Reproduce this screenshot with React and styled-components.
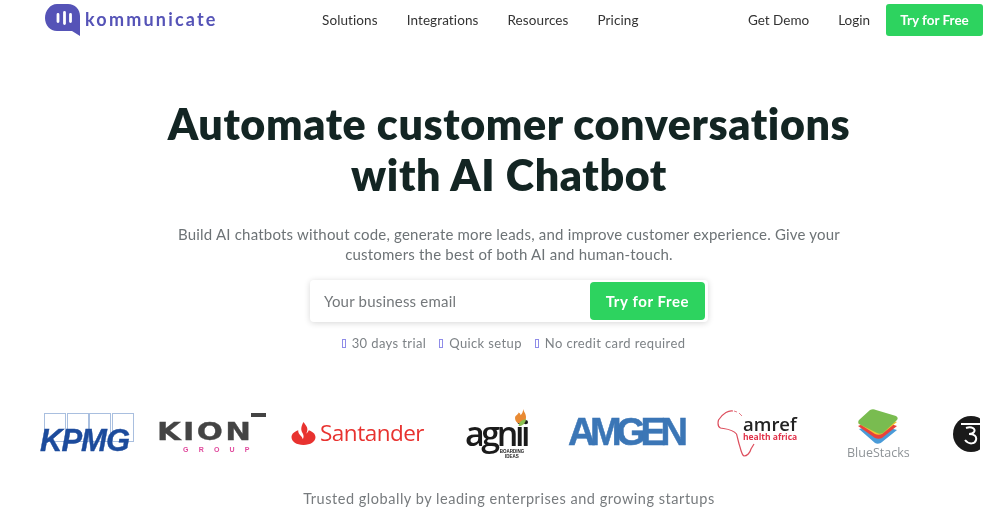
import React from 'react';
import styled, { createGlobalStyle } from 'styled-components';

const GlobalStyle = createGlobalStyle`
  html, body {
    margin: 0;
    padding: 0;
    background: #fff;
    overflow: hidden;
  }
  body {
    font-family: 'Lato', 'Open Sans', sans-serif;
    color: #1a2a2a;
  }
`;

const Page = styled.div`
  width: 1006px;
  height: 513px;
  overflow: hidden;
  filter: blur(0.6px);
`;

const Header = styled.header`
  display: flex;
  align-items: center;
  height: 40px;
  padding: 0 23px 0 45px;
`;

const Brand = styled.div`
  display: flex;
  align-items: flex-start;
  gap: 5px;
  width: 277px;
  height: 40px;
  padding-top: 4px;
  box-sizing: border-box;
`;

const BrandName = styled.span`
  font-size: 18px;
  line-height: 22px;
  font-weight: 700;
  letter-spacing: 2.2px;
  color: #5553b7;
  margin-top: 4px;
`;

const Nav = styled.nav`
  display: flex;
  gap: 29px;
  font-size: 13.5px;
  letter-spacing: 0.1px;
  color: #333;
`;

const Actions = styled.div`
  display: flex;
  align-items: center;
  margin-left: auto;
  font-size: 13.5px;
  color: #333;
`;

const ActionLink = styled.span`
  margin-right: ${(p) => p.$gap}px;
`;

const HeaderButton = styled.button`
  width: 97px;
  height: 32px;
  border: 0;
  border-radius: 3px;
  background: #2dd35f;
  color: #fff;
  font: 700 13.5px 'Lato', sans-serif;
`;

const Hero = styled.main`
  display: flex;
  flex-direction: column;
  align-items: center;
  padding-left: 12px;
`;

const Title = styled.h1`
  margin: 58px 0 0;
  font-size: 43px;
  line-height: 51px;
  font-weight: 800;
  letter-spacing: 0.6px;
  text-align: center;
  color: #132523;
`;

const Lead = styled.p`
  margin: 24px 0 0;
  width: 680px;
  font-size: 15px;
  line-height: 20px;
  letter-spacing: 0.2px;
  text-align: center;
  color: #6d7376;
`;

const EmailForm = styled.form`
  display: flex;
  align-items: center;
  justify-content: space-between;
  box-sizing: border-box;
  width: 398px;
  height: 42px;
  margin-top: 16px;
  padding: 0 3px 0 14px;
  border-radius: 4px;
  background: #fff;
  box-shadow: 0 1px 6px rgba(0, 0, 0, 0.16);
`;

const Placeholder = styled.span`
  font-size: 15px;
  letter-spacing: 0.2px;
  color: #74787b;
`;

const SubmitButton = styled.button`
  width: 115px;
  height: 38px;
  border: 0;
  border-radius: 4px;
  background: #2dd35f;
  color: #fff;
  font: 700 15px 'Lato', sans-serif;
  letter-spacing: 0.6px;
`;

const Perks = styled.ul`
  display: flex;
  gap: 13px;
  margin: 13px 0 0 9px;
  padding: 0;
  list-style: none;
  font-size: 13px;
  letter-spacing: 0.38px;
  color: #7d8286;
`;

const Perk = styled.li`
  display: flex;
  align-items: center;
  gap: 6px;
`;

const MissingGlyph = styled.i`
  box-sizing: border-box;
  width: 4px;
  height: 9px;
  border: 1px solid #8f8ce8;
`;

const LogoStrip = styled.div`
  display: flex;
  align-items: flex-start;
  align-self: flex-start;
  width: 940px;
  height: 52px;
  margin: 57px 0 0 28px;
  overflow: hidden;
`;

const Logo = styled.div`
  position: relative;
  flex: none;
  width: ${(p) => p.$w}px;
  height: 52px;
  margin-right: ${(p) => p.$gap || 0}px;
`;

const KpmgBoxes = styled.svg`
  position: absolute;
  left: 4px;
  top: 5px;
`;

const KpmgText = styled.span`
  position: absolute;
  left: 0;
  top: 19px;
  font: italic 700 31px/28px 'Liberation Sans', sans-serif;
  letter-spacing: -1px;
  color: #1c4b9c;
  -webkit-text-stroke: 0.4px #1c4b9c;
`;

const KionText = styled.span`
  position: absolute;
  left: -1px;
  top: 10px;
  font: 700 24px/28px 'DejaVu Sans', sans-serif;
  letter-spacing: 1.8px;
  color: #444;
  transform: scaleX(1.28);
  transform-origin: left center;
  -webkit-text-stroke: 0.3px #444;
`;

const KionBar = styled.i`
  position: absolute;
  right: 0;
  top: 5px;
  width: 15px;
  height: 4px;
  background: #444;
`;

const KionGroup = styled.span`
  position: absolute;
  left: 25px;
  top: 38px;
  font: 700 7px/8px 'Liberation Sans', sans-serif;
  letter-spacing: 10.2px;
  color: #e0489c;
`;

const SantanderRow = styled.div`
  display: flex;
  align-items: center;
  gap: 4px;
  height: 50px;
`;

const SantanderText = styled.span`
  font: 400 22.5px/28px 'Open Sans', sans-serif;
  letter-spacing: -0.5px;
  color: #e8322f;
`;

const AgniiText = styled.span`
  position: absolute;
  left: 0;
  top: 10px;
  font: 600 34px/30px 'Open Sans', sans-serif;
  letter-spacing: -3.4px;
  color: #1b1b1b;
`;

const AgniiFlame = styled.svg`
  position: absolute;
  left: 48px;
  top: 1px;
`;

const AgniiSub = styled.span`
  position: absolute;
  left: 33px;
  top: 41px;
  width: 28px;
  font: 700 4.5px/5px 'Liberation Sans', sans-serif;
  text-align: center;
  color: #222;
`;

const AmgenText = styled.span`
  position: absolute;
  left: 0;
  top: 6px;
  font: 700 38px/36px 'Liberation Sans', sans-serif;
  letter-spacing: -5.4px;
  color: #3b76b6;
  -webkit-text-stroke: 0.5px #3b76b6;
`;

const AfricaShape = styled.svg`
  position: absolute;
  left: 0;
  top: 2px;
`;

const AmrefName = styled.span`
  position: absolute;
  left: 26px;
  top: 9px;
  font: 600 18.5px/14px 'Open Sans', sans-serif;
  color: #222;
`;

const AmrefSub = styled.span`
  position: absolute;
  left: 26px;
  top: 25px;
  font: 700 8.5px/8px 'Open Sans', sans-serif;
  color: #e0324a;
`;

const StacksIcon = styled.svg`
  position: absolute;
  left: 11px;
  top: 1px;
`;

const StacksText = styled.span`
  position: absolute;
  left: 0;
  top: 38px;
  font: 400 12.5px/14px 'Open Sans', sans-serif;
  color: #8f9498;
`;

const BlackBadge = styled.svg`
  position: absolute;
  left: 1px;
  top: 8px;
`;

const Trusted = styled.p`
  margin: 30px 0 0;
  font-size: 14.5px;
  letter-spacing: 0.53px;
  color: #777b7e;
`;

const BubbleIcon = () => (
  <svg width="35" height="32" viewBox="0 0 35 32">
    <path
      d="M12 0h11c7 0 12 5 12 12v20l-8-5H12C5 27 0 21 0 14S5 0 12 0z"
      fill="#5553b7"
    />
    <path
      d="M13 10.5v7M19.5 8.5v11M25.5 10.5v7"
      stroke="#fff"
      strokeWidth="2.8"
      strokeLinecap="round"
    />
  </svg>
);

const SantanderFlame = () => (
  <svg width="25" height="23" viewBox="0 0 25 24">
    <path
      d="M12.5 0c2 3 4 5 4 7 .4 2-.6 3.4-1 5 1-1 2-2 2.5-3.5C22 10 25 12 25 16c0 4.5-5 8-12.5 8S0 20.5 0 16c0-4 3-6 7-7.5-.2 2 .8 4 2.8 6 1.2 1 1.8 2.5 2 3.5 1-2 1.2-4-.3-6.5-1.8-3-2-6 1-11.5z"
      fill="#e8322f"
    />
  </svg>
);

export default function App() {
  return (
    <Page>
      <GlobalStyle />
      <Header>
        <Brand>
          <BubbleIcon />
          <BrandName>kommunicate</BrandName>
        </Brand>
        <Nav>
          <span>Solutions</span>
          <span>Integrations</span>
          <span>Resources</span>
          <span>Pricing</span>
        </Nav>
        <Actions>
          <ActionLink $gap={29}>Get Demo</ActionLink>
          <ActionLink $gap={16}>Login</ActionLink>
          <HeaderButton type="button">Try for Free</HeaderButton>
        </Actions>
      </Header>
      <Hero>
        <Title>
          Automate customer conversations
          <br />
          with AI Chatbot
        </Title>
        <Lead>
          Build AI chatbots without code, generate more leads, and improve customer experience. Give
          your customers the best of both AI and human-touch.
        </Lead>
        <EmailForm>
          <Placeholder>Your business email</Placeholder>
          <SubmitButton type="button">Try for Free</SubmitButton>
        </EmailForm>
        <Perks>
          <Perk>
            <MissingGlyph />
            30 days trial
          </Perk>
          <Perk>
            <MissingGlyph />
            Quick setup
          </Perk>
          <Perk>
            <MissingGlyph />
            No credit card required
          </Perk>
        </Perks>
        <LogoStrip>
          <Logo $w={94} $gap={24}>
            <KpmgBoxes width="90" height="29" viewBox="0 0 90 29">
              <g fill="#fff" stroke="#a9bfdf" strokeWidth="1">
                <rect x="0.5" y="0.5" width="21" height="28" />
                <rect x="23.5" y="0.5" width="21" height="28" />
                <rect x="45.5" y="0.5" width="21" height="28" />
                <rect x="68.5" y="0.5" width="21" height="28" />
              </g>
            </KpmgBoxes>
            <KpmgText>KPMG</KpmgText>
          </Logo>
          <Logo $w={108} $gap={25}>
            <KionText>KION</KionText>
            <KionBar />
            <KionGroup>GROUP</KionGroup>
          </Logo>
          <Logo $w={134} $gap={40}>
            <SantanderRow>
              <SantanderFlame />
              <SantanderText>Santander</SantanderText>
            </SantanderRow>
          </Logo>
          <Logo $w={64} $gap={39}>
            <AgniiText>agnii</AgniiText>
            <AgniiFlame width="14" height="18" viewBox="0 0 15 20">
              <path d="M11 0c1 4 4 6 3 11-1 3-3 4-5 4l-1 1C4 16 2 13 2 10c0-3 3-3 4-6 2 1 2 2 2 3 2-2 3-4 3-7z" fill="#e98a33" />
              <path d="M6 19c0-4 3-7 8-8 0 4-3 8-8 8z" fill="#8cc152" />
            </AgniiFlame>
            <AgniiSub>BOARDING IDEAS</AgniiSub>
          </Logo>
          <Logo $w={118} $gap={31}>
            <AmgenText>AMGEN</AmgenText>
          </Logo>
          <Logo $w={90} $gap={40}>
            <AfricaShape width="40" height="50" viewBox="0 0 40 50">
              <path
                d="M16 1C12 0 6 3 1.5 10c-1 4 0 7 2 8 5 1 12 1 16 6 1 3 2 9 3.5 13 1 4 2 8 4 9 3 0 6-3 7-7l3-5"
                fill="none"
                stroke="#dd4f5e"
                strokeWidth="1.2"
              />
              <path d="M17 1l3 1M22 3l3 3" fill="none" stroke="#e57b86" strokeWidth="1" />
            </AfricaShape>
            <AmrefName>amref</AmrefName>
            <AmrefSub>health africa</AmrefSub>
          </Logo>
          <Logo $w={62} $gap={43}>
            <StacksIcon width="40" height="35" viewBox="0 0 40 35">
              <path d="M1 20l17-5 21 6-15 12c-2 2-5 2-7 1z" fill="#4a9bd8" />
              <path d="M0 17l17-7 22 7-15 12c-2 1-5 1-7 0z" fill="#e8433a" />
              <path d="M0 14l16-8 23 7-15 12c-2 1-5 1-7 0z" fill="#f3c52e" />
              <path d="M1 11L12 1c2-1 4-1 6 0l20 6c2 1 2 3 1 4L25 24c-2 1-4 1-6 0L1 15c-1-1-1-3 0-4z" fill="#79bc50" />
            </StacksIcon>
            <StacksText>BlueStacks</StacksText>
          </Logo>
          <Logo $w={28}>
            <BlackBadge width="36" height="36" viewBox="0 0 36 36">
              <circle cx="18" cy="18" r="18" fill="#1a1a1a" />
              <path d="M8 8h22M13 12c6-2 10 1 8 4-1 2-3 2-5 2 5 0 8 2 7 6-1 4-7 5-11 0" fill="none" stroke="#fff" strokeWidth="2" />
            </BlackBadge>
          </Logo>
        </LogoStrip>
        <Trusted>Trusted globally by leading enterprises and growing startups</Trusted>
      </Hero>
    </Page>
  );
}
